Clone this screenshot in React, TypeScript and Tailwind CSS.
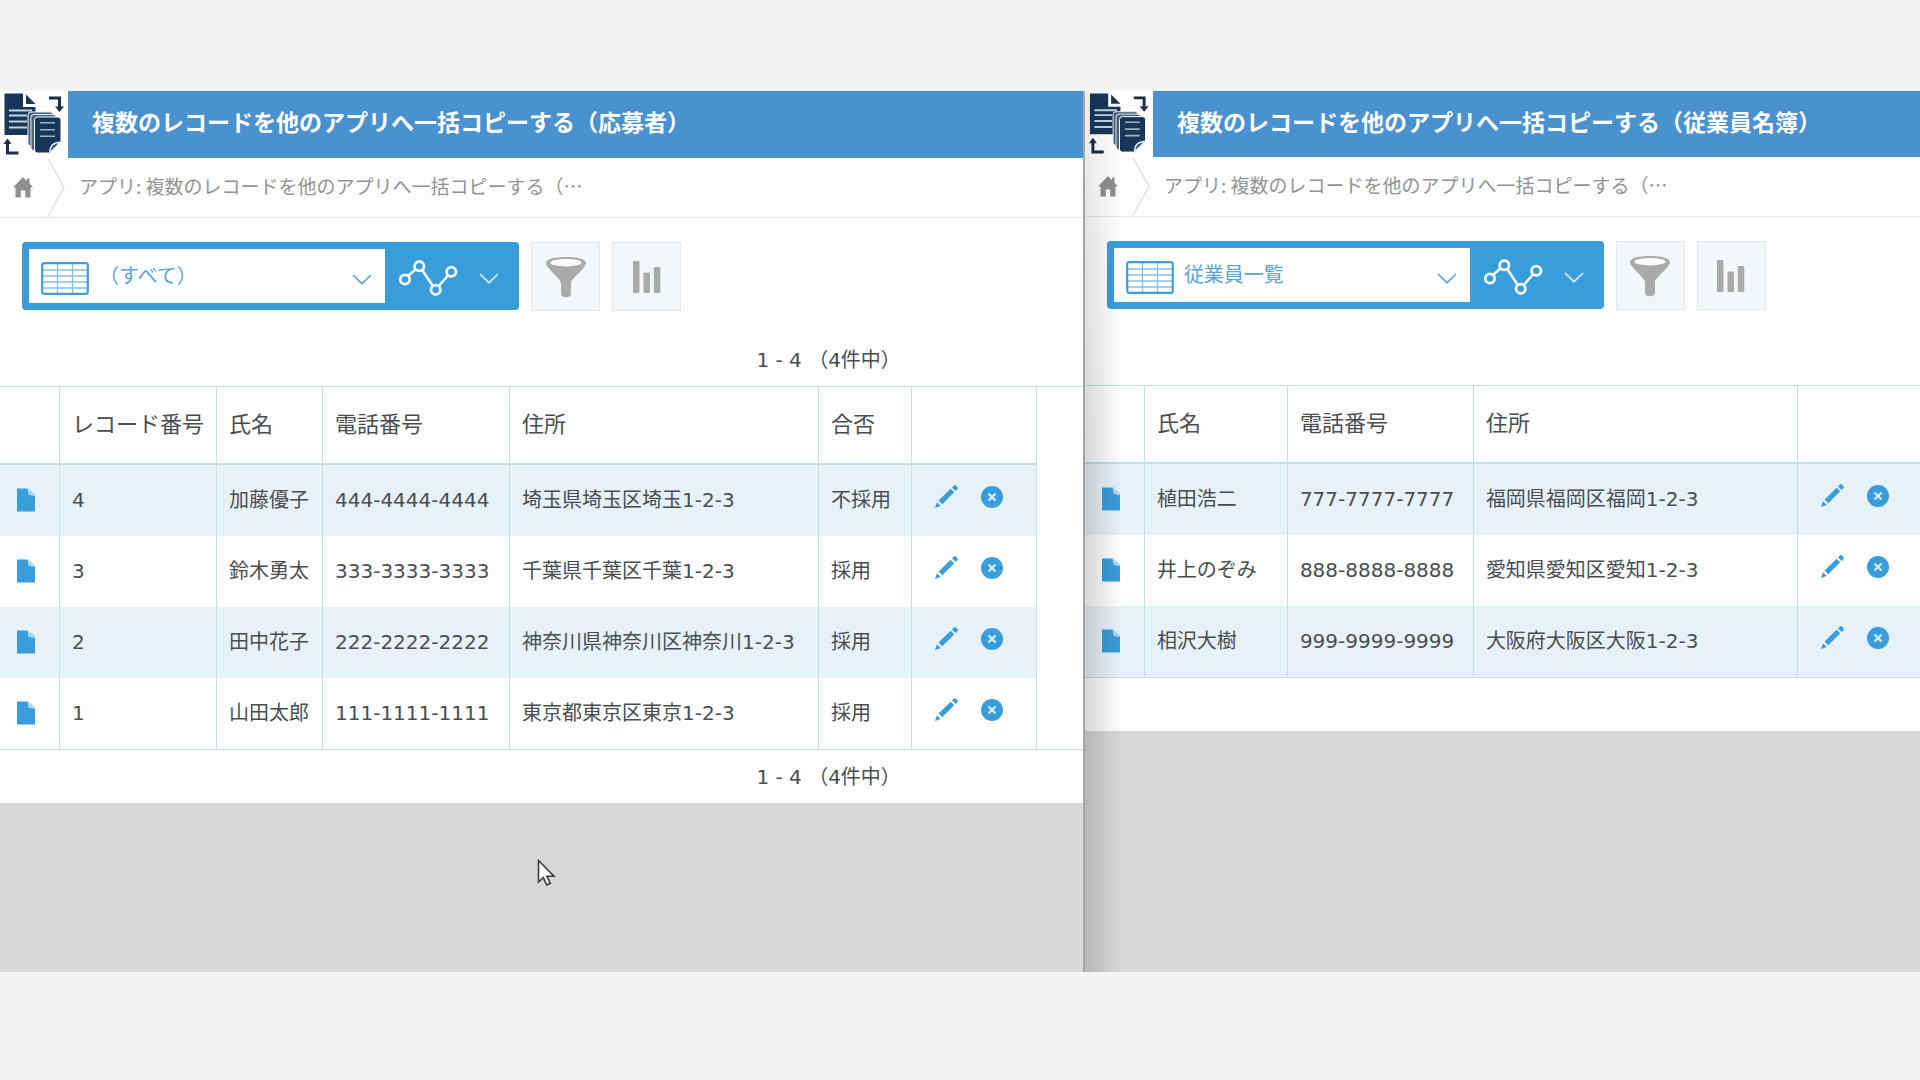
import { useState } from 'react';

type AppRecord = { id: string; cells: string[] };

type Column = { label: string; width: string };

const applicantColumns: Column[] = [
  { label: 'レコード番号', width: 'w-[157px]' },
  { label: '氏名', width: 'w-[106px]' },
  { label: '電話番号', width: 'w-[187px]' },
  { label: '住所', width: 'w-[309px]' },
  { label: '合否', width: 'w-[93px]' },
];

const applicants: AppRecord[] = [
  { id: '4', cells: ['4', '加藤優子', '444-4444-4444', '埼玉県埼玉区埼玉1-2-3', '不採用'] },
  { id: '3', cells: ['3', '鈴木勇太', '333-3333-3333', '千葉県千葉区千葉1-2-3', '採用'] },
  { id: '2', cells: ['2', '田中花子', '222-2222-2222', '神奈川県神奈川区神奈川1-2-3', '採用'] },
  { id: '1', cells: ['1', '山田太郎', '111-1111-1111', '東京都東京区東京1-2-3', '採用'] },
];

const employeeColumns: Column[] = [
  { label: '氏名', width: 'w-[143px]' },
  { label: '電話番号', width: 'w-[186px]' },
  { label: '住所', width: 'w-[324px]' },
];

const employees: AppRecord[] = [
  { id: '7', cells: ['植田浩二', '777-7777-7777', '福岡県福岡区福岡1-2-3'] },
  { id: '8', cells: ['井上のぞみ', '888-8888-8888', '愛知県愛知区愛知1-2-3'] },
  { id: '9', cells: ['相沢大樹', '999-9999-9999', '大阪府大阪区大阪1-2-3'] },
];

function CopyLogo() {
  return (
    <svg viewBox="0 0 68 67" className="h-full w-[68px] shrink-0 bg-[#fdfdfd]" aria-hidden="true">
      {/* source sheet */}
      <path d="M4.5 2.5H23V16H35.5V44H4.5Z" fill="#17375a" />
      <path d="M26 3.5L35.5 13H26Z" fill="#17375a" />
      <path d="M9 19.5H32M9 24.5H27M9 30.5H27M9 36.5H27" stroke="#c9d3de" strokeWidth="2" />
      {/* copies */}
      <rect x="28" y="21" width="25" height="34" rx="3" fill="#48617e" stroke="#e6ebf0" />
      <rect x="31" y="23.5" width="25" height="36" rx="3" fill="#48617e" stroke="#e6ebf0" />
      <path
        d="M37.5 26H58Q61 26 61 29V51L50 62H37.5Q34.5 62 34.5 59V29Q34.5 26 37.5 26Z"
        fill="#17375a"
        stroke="#fdfdfd"
      />
      <path d="M61.5 50.5V63H49.5Z" fill="#fdfdfd" />
      <path d="M50 61.5Q49.5 52 60.5 51Z" fill="#17375a" stroke="#dfe6ec" strokeWidth="1.6" />
      <path d="M40 31.7H55M40 38.7H55M40 45.3H55" stroke="#9fb0c2" strokeWidth="1.6" />
      {/* arrows */}
      <path d="M49 7H59.5V16M18.5 62H7.5V51" fill="none" stroke="#1d2f45" strokeWidth="3" />
      <path d="M55 15.5H64L59.5 21ZM3.5 53H11.5L7.5 47.5Z" fill="#1d2f45" />
    </svg>
  );
}

function HomeIcon() {
  return (
    <svg viewBox="0 0 20 21" className="h-[21px] w-5" fill="#8e8f8f" aria-hidden="true">
      <path d="M10 0L14 4.2V1.5H16.5V6.8L20 10.5H17.5V20.5H12.2V13.5H7.8V20.5H2.5V10.5H0Z" />
    </svg>
  );
}

function TableIcon() {
  return (
    <svg viewBox="0 0 48 33" className="mt-1 h-[33px] w-12" fill="none" aria-hidden="true">
      <path d="M2 8H46M2 14H46M2 20H46M2 26H46M16.5 2V31M31.5 2V31" stroke="#86bfe2" strokeWidth="1.3" />
      <rect x="1.2" y="1.2" width="45.6" height="30.6" rx="2" stroke="#3f9edb" strokeWidth="2.2" />
    </svg>
  );
}

function Chevron({ className }: { className?: string }) {
  return (
    <svg viewBox="0 0 20 11" className={`h-[11px] w-5 ${className ?? ''}`} fill="none" stroke="currentColor" aria-hidden="true">
      <path d="M1 1L10 9.7L19 1" strokeWidth="1.7" />
    </svg>
  );
}

function GraphIcon() {
  return (
    <svg viewBox="0 0 59 36" className="mt-1 h-9 w-[59px]" fill="none" stroke="#f3fafe" aria-hidden="true">
      <path d="M9.5 15.5L16.5 9.5M23.5 10.5L33.5 25.5M40.2 25.5L49 15.5" strokeWidth="2.6" />
      <circle cx="6" cy="19.5" r="4.7" strokeWidth="2.8" />
      <circle cx="20.3" cy="6.2" r="4.7" strokeWidth="2.8" />
      <circle cx="36.7" cy="29.8" r="4.7" strokeWidth="2.8" />
      <circle cx="52.3" cy="11.8" r="4.7" strokeWidth="2.8" />
    </svg>
  );
}

function FunnelIcon() {
  return (
    <svg viewBox="0 0 42 42" className="size-[42px]" fill="#a9abab" aria-hidden="true">
      <path d="M1 7C1 3 10 1 21 1S41 3 41 7C41 12 26 23 26 27V38C26 42.3 16 42.3 16 38V27C16 23 1 12 1 7Z" />
      <ellipse cx="21" cy="6.7" rx="15.5" ry="3.7" fill="#fbfcfc" />
    </svg>
  );
}

function BarsIcon() {
  return (
    <svg viewBox="0 0 28 32" className="h-8 w-7" fill="#a9abab" aria-hidden="true">
      <rect x="0" y="0" width="6.5" height="32" rx="1" />
      <rect x="10.5" y="11.5" width="6.5" height="20.5" rx="1" />
      <rect x="20.8" y="6" width="6.5" height="26" rx="1" />
    </svg>
  );
}

function FileIcon() {
  return (
    <svg viewBox="0 0 18 24" className="h-6 w-[18px]" aria-hidden="true">
      <path d="M0 .5H11L18 7V23.5H0Z" fill="#3a9ddb" />
      <path d="M11 .5L12 6.5L17.5 7.5Z" fill="#9fd0ee" stroke="#cfe7f5" strokeWidth=".8" />
    </svg>
  );
}

function PencilIcon() {
  return (
    <svg viewBox="0 0 23 23" className="size-[23px]" fill="#3a9ddb" aria-hidden="true">
      <path d="M0 23L2 17.3L5.7 21Z" />
      <path d="M3.6 15.6L15.6 3.7L19.2 7.3L7.3 19.3Z" />
      <path d="M17 2.4L19.2 .3Q20 -.2 20.8 .5L22.5 2.2Q23.2 3 22.7 3.8L20.7 6.1Z" />
    </svg>
  );
}

function DeleteIcon() {
  return (
    <svg viewBox="0 0 22 22" className="size-[22px]" aria-hidden="true">
      <circle cx="11" cy="11" r="11" fill="#3a9ddb" />
      <path d="M7.5 7.5L14.5 14.5M14.5 7.5L7.5 14.5" stroke="#d6ecf8" strokeWidth="2.2" />
    </svg>
  );
}

function Breadcrumb() {
  return (
    <nav className="flex h-[60px] items-center border-b border-[#e3ebed]">
      <a href="#home" aria-label="ホーム" className="ml-[13px] flex w-[34px]">
        <HomeIcon />
      </a>
      <svg viewBox="0 0 18 58" className="h-full w-[18px]" fill="none" stroke="#dde4e6" aria-hidden="true">
        <path d="M1 0L17 29L1 58" strokeWidth="1.5" />
      </svg>
      <a href="#app" className="ml-[14px] pb-1 text-[19px] leading-7 text-[#929494] font-['Noto_Sans_CJK_JP',sans-serif]">
        アプリ: 複数のレコードを他のアプリへ一括コピーする（…
      </a>
    </nav>
  );
}

function Toolbar({ view }: { view: string }) {
  const [selected, setSelected] = useState(view);

  return (
    <div className="flex h-[92px] items-start pt-6 pl-[22px]">
      <div className="flex h-[68px] rounded bg-[#3a9ddb] py-[7px] pl-[7px]">
        <div className="relative flex w-[356px] items-center bg-[#fdfdfd] pl-3">
          <TableIcon />
          <select
            aria-label="一覧"
            value={selected}
            onChange={(e) => setSelected(e.target.value)}
            className="h-full flex-1 appearance-none bg-transparent pl-[10px] text-[20px] text-[#5ba5d3] outline-none"
          >
            <option>{view}</option>
          </select>
          <Chevron className="pointer-events-none absolute top-[25px] right-[13px] text-[#62a9d6]" />
        </div>
        <button type="button" aria-label="グラフ" className="flex w-[134px] items-center gap-[21px] pl-[14px]">
          <GraphIcon />
          <Chevron className="mt-1 text-[#d5ebf8]" />
        </button>
      </div>
      <button type="button" aria-label="絞り込む" className="ml-3 flex size-[69px] items-center justify-center border border-[#e2e8ea] bg-[#f4f7f9]">
        <FunnelIcon />
      </button>
      <button type="button" aria-label="集計する" className="ml-3 flex size-[69px] items-center justify-center border border-[#e2e8ea] bg-[#f4f7f9]">
        <BarsIcon />
      </button>
    </div>
  );
}

function RecordTable({ columns, records, className }: { columns: Column[]; records: AppRecord[]; className: string }) {
  return (
    <div className="border-y border-[#c4deeb]">
      <table className={`table-fixed border-separate border-spacing-0 text-left ${className}`}>
        <thead>
          <tr className="h-[78px]">
            <th className="w-[60px] border-r border-b-2 border-[#c4deeb]" aria-label="詳細" />
            {columns.map((c) => (
              <th key={c.label} className={`border-r border-b-2 border-[#c4deeb] px-3 text-[22px] leading-7 font-normal whitespace-nowrap ${c.width}`}>
                {c.label}
              </th>
            ))}
            <th className="border-b-2 border-[#c4deeb]" aria-label="操作" />
          </tr>
        </thead>
        <tbody>
          {records.map((r) => (
            <tr key={r.id} className="h-[71px] odd:bg-[#e7f2f8]">
              <td className="border-r border-[#c4deeb] pb-0.5 pl-[17px]">
                <a href={`#record-${r.id}`} aria-label="レコードの詳細" className="block">
                  <FileIcon />
                </a>
              </td>
              {r.cells.map((cell, i) => (
                <td key={i} className="border-r border-[#c4deeb] px-3 pb-0.5 text-[20px] leading-7 whitespace-nowrap">
                  {cell}
                </td>
              ))}
              <td className="pb-2 pl-[23px]">
                <div className="flex items-center gap-[23px]">
                  <button type="button" aria-label="編集"><PencilIcon /></button>
                  <button type="button" aria-label="削除"><DeleteIcon /></button>
                </div>
              </td>
            </tr>
          ))}
        </tbody>
      </table>
    </div>
  );
}

function Pager({ text }: { text: string }) {
  return <p className="pr-[182px] text-right text-[20px] leading-7">{text}</p>;
}

export default function App() {
  return (
    <div className="flex min-h-screen flex-col bg-[#f4f4f4] pt-[91px] pb-[108px] text-[#4a4d50] font-['DejaVu_Sans','Noto_Sans_CJK_JP',sans-serif]">
      <main className="relative flex flex-1 overflow-hidden bg-[#d6d8d7]">
        {/* Applicants */}
        <section className="w-[56.4%] shrink-0">
          <div className="bg-[#fdfdfd]">
            <header className="flex h-[67px] bg-[#4a91cf]">
              <CopyLogo />
              <h1 className="flex items-center pb-1.5 pl-6 text-[23px] font-bold whitespace-nowrap text-white font-['Noto_Sans_CJK_JP',sans-serif]">
                複数のレコードを他のアプリへ一括コピーする（応募者）
              </h1>
            </header>
            <Breadcrumb />
            <Toolbar view="（すべて）" />
            <div className="flex h-[76px] flex-col justify-end pb-3">
              <Pager text="1 - 4 （4件中）" />
            </div>
            <RecordTable columns={applicantColumns} records={applicants} className="w-[1037px] border-r border-[#c4deeb]" />
            <div className="flex h-[53px] flex-col justify-center">
              <Pager text="1 - 4 （4件中）" />
            </div>
          </div>
        </section>

        {/* Employees */}
        <section className="relative min-w-0 flex-1 overflow-hidden border-l-2 border-[#a3a6a8]">
          <div className="bg-[#fdfdfd]">
            <header className="flex h-[66px] bg-[#4a91cf]">
              <CopyLogo />
              <h1 className="flex items-center pb-1.5 pl-6 text-[23px] font-bold whitespace-nowrap text-white font-['Noto_Sans_CJK_JP',sans-serif]">
                複数のレコードを他のアプリへ一括コピーする（従業員名簿）
              </h1>
            </header>
            <Breadcrumb />
            <Toolbar view="従業員一覧" />
            <div className="h-[76px]" />
            <RecordTable columns={employeeColumns} records={employees} className="w-full" />
            <div className="h-[53px]" />
          </div>
          {/* shadow cast by the window on the left */}
          <div className="pointer-events-none absolute inset-y-0 left-0 w-9 bg-linear-to-r from-black/15 to-transparent mask-[linear-gradient(to_bottom,rgba(0,0,0,0.4),black_40%)]" />
        </section>

        <svg viewBox="0 0 20 28" className="absolute top-[768px] left-[537px] h-7 w-5" aria-hidden="true">
          <path d="M1.5 1.5V23L6.3 18.6L9.8 26L13.3 24.3L10 17.3H17Z" fill="#fff" stroke="#3c3f42" strokeWidth="1.6" />
        </svg>
      </main>
    </div>
  );
}
